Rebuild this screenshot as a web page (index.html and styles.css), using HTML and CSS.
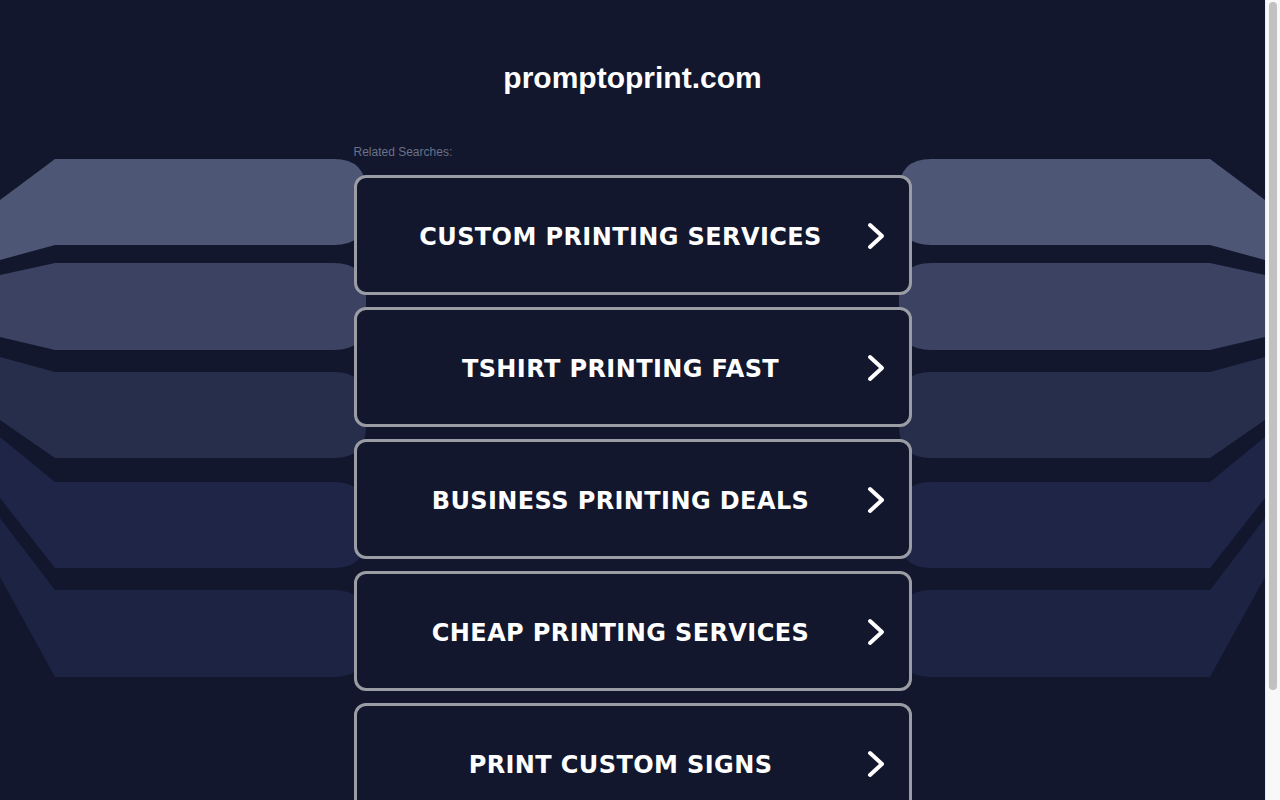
FILE: index.html
```html
<!DOCTYPE html>
<html lang="en">
<head>
<meta charset="utf-8">
<title>promptoprint.com</title>
<link rel="stylesheet" href="styles.css">
</head>
<body>
<div class="site">
  <svg class="bg" viewBox="0 0 1265 700" preserveAspectRatio="none" aria-hidden="true">
    <defs>
      <g id="bands">
        <path fill="#4d5674" d="M0,200 L55,159 L334,159 Q366,159 366,191 L366,213 Q366,245 334,245 L55,245 L0,260 Z"/>
        <path fill="#3b4262" d="M0,275 L55,263 L334,263 Q366,263 366,295 L366,318 Q366,350 334,350 L55,350 L0,337 Z"/>
        <path fill="#272e4c" d="M0,357 L55,372 L334,372 Q366,372 366,404 L366,426 Q366,458 334,458 L55,458 L0,420 Z"/>
        <path fill="#1e2546" d="M0,437 L55,482 L334,482 Q366,482 366,514 L366,536 Q366,568 334,568 L55,568 L0,498 Z"/>
        <path fill="#1c2343" d="M0,518 L55,590 L334,590 Q366,590 366,622 L366,645 Q366,677 334,677 L55,677 L0,577 Z"/>
      </g>
    </defs>
    <use href="#bands"/>
    <use href="#bands" transform="translate(1265,0) scale(-1,1)"/>
  </svg>
  <main class="page">
    <header class="header">
      <h1 class="domain">promptoprint.com</h1>
    </header>
    <section class="related">
      <p class="related-label">Related Searches:</p>
      <ul class="links">
        <li><a class="link" href="#"><span class="link-text">CUSTOM PRINTING SERVICES</span><svg class="chev" viewBox="0 0 18 28"><polyline points="3,3 15,14 3,25"/></svg></a></li>
        <li><a class="link" href="#"><span class="link-text">TSHIRT PRINTING FAST</span><svg class="chev" viewBox="0 0 18 28"><polyline points="3,3 15,14 3,25"/></svg></a></li>
        <li><a class="link" href="#"><span class="link-text">BUSINESS PRINTING DEALS</span><svg class="chev" viewBox="0 0 18 28"><polyline points="3,3 15,14 3,25"/></svg></a></li>
        <li><a class="link" href="#"><span class="link-text">CHEAP PRINTING SERVICES</span><svg class="chev" viewBox="0 0 18 28"><polyline points="3,3 15,14 3,25"/></svg></a></li>
        <li><a class="link" href="#"><span class="link-text">PRINT CUSTOM SIGNS</span><svg class="chev" viewBox="0 0 18 28"><polyline points="3,3 15,14 3,25"/></svg></a></li>
      </ul>
    </section>
  </main>
</div>
<div class="scrollbar" aria-hidden="true"><div class="scrollbar-thumb"></div></div>
</body>
</html>
```
FILE: styles.css
```css
html, body {
  margin: 0;
  padding: 0;
}
body {
  background: #12172d;
  font-family: "Liberation Sans", Arial, sans-serif;
  color: #ffffff;
}
.site {
  position: relative;
  margin-right: 15px;
  min-height: 930px;
}
.bg {
  position: absolute;
  top: 0;
  left: 0;
  width: 100%;
  height: 700px;
  z-index: 0;
  display: block;
}
.page {
  position: relative;
  z-index: 1;
  width: 558px;
  margin: 0 auto;
  padding: 60px 0 107px;
}
.header {
  display: flex;
  justify-content: center;
}
.domain {
  margin: 0;
  font-family: "Liberation Sans", Arial, sans-serif;
  font-weight: bold;
  font-size: 30px;
  line-height: 36px;
  color: #ffffff;
  white-space: nowrap;
}
.related {
  margin-top: 49px;
}
.related-label {
  margin: 0 0 16px;
  font-size: 12px;
  line-height: 14px;
  color: #6b7188;
}
.links {
  list-style: none;
  margin: 0;
  padding: 0;
  display: flex;
  flex-direction: column;
  gap: 12px;
}
.link {
  box-sizing: border-box;
  height: 120px;
  border: 3px solid #9b9da4;
  border-radius: 12px;
  background: #12172d;
  display: grid;
  grid-template-columns: 1fr 18px 24px;
  align-items: center;
  text-decoration: none;
  color: #ffffff;
}
.link-text {
  grid-column: 1 / 3;
  grid-row: 1;
  padding-top: 3px;
  text-align: center;
  font-family: "DejaVu Sans", Verdana, sans-serif;
  font-weight: bold;
  font-size: 24px;
  letter-spacing: 0.4px;
  white-space: nowrap;
}
.chev {
  grid-column: 2;
  grid-row: 1;
  width: 18px;
  height: 28px;
  display: block;
  margin-top: 2px;
}
.chev polyline {
  fill: none;
  stroke: #ffffff;
  stroke-width: 4;
  stroke-linecap: round;
  stroke-linejoin: round;
}
.scrollbar {
  position: fixed;
  top: 0;
  right: 0;
  width: 15px;
  height: 100vh;
  background: #f8f8f8;
  border-left: 1px solid #ececec;
  box-sizing: border-box;
  padding: 2px 3px 0 3px;
}
.scrollbar-thumb {
  height: 688px;
  border-radius: 4px;
  background: #c1c1c1;
}
```
